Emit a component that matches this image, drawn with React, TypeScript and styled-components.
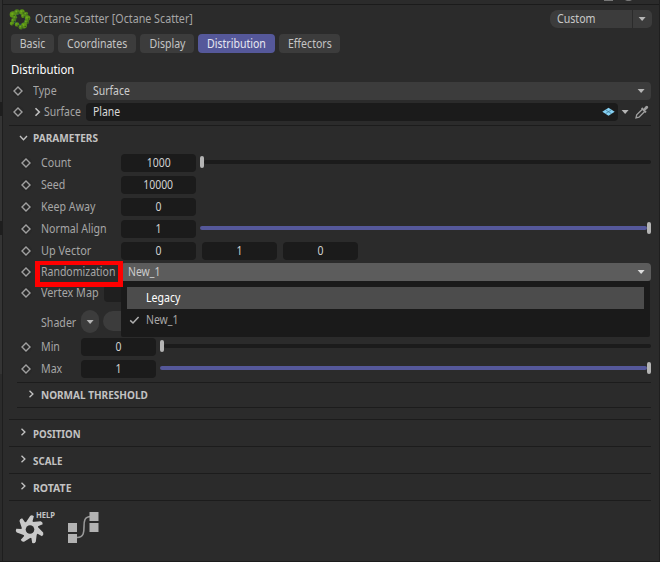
import React from "react";
import styled, { createGlobalStyle } from "styled-components";

const Global = createGlobalStyle`
  * { box-sizing: border-box; }
  body { margin: 0; background: #2b2b2b; overflow: hidden; }
`;

const Window = styled.div`
  width: 660px;
  height: 562px;
  display: grid;
  grid-template-columns: 3px 1fr 1px;
  background: #2b2b2b;
  border-bottom: 1px solid #1c1c1c;
  color: #a6a6a6;
  font: 12px/18px "Noto Sans", "Open Sans", sans-serif;
  white-space: nowrap;
`;
const LeftEdge = styled.div`
  display: flex;
  flex-direction: column;
  background: #303030;
  border-right: 1px solid #1e1e1e;
`;
const EdgePiece = styled.div<{ $h: number; $c: string }>`
  height: ${(p) => p.$h}px;
  background: ${(p) => p.$c};
`;
const RightEdge = styled.div`
  background: #1f1f1f;
`;
const Panel = styled.main`
  min-width: 0;
  display: flex;
  flex-direction: column;
`;
const TopStrip = styled.div`
  height: 5px;
  flex: none;
  padding-left: 601px;
  border-bottom: 1px solid #1b1b1b;
  svg { display: block; }
`;
const Header = styled.header`
  height: 29px;
  flex: none;
  display: flex;
  align-items: flex-start;
  padding: 4px 7px 0 6px;
  > svg { flex: none; }
`;
const Title = styled.div`
  flex: 1;
  padding: 1px 0 0 4px;
`;
const Preset = styled.div`
  display: grid;
  grid-template-columns: 82px 19px;
  gap: 1px;
  width: 102px;
  height: 18px;
  margin-top: 1px;
`;
const PresetName = styled.div`
  padding-left: 7px;
  border-radius: 8px 0 0 8px;
  background: #3c3c3c;
  color: #c8c8c8;
`;
const PresetButton = styled.div`
  display: grid;
  place-items: center;
  border-radius: 0 5px 5px 0;
  background: #3c3c3c;
`;
const Tabs = styled.nav`
  display: flex;
  gap: 4px;
  height: 19px;
  flex: none;
  padding-left: 8px;
`;
const Tab = styled.div<{ $w: number; $active?: boolean }>`
  width: ${(p) => p.$w}px;
  height: 19px;
  line-height: 20px;
  display: flex;
  justify-content: center;
  border-radius: 4px;
  background: ${(p) => (p.$active ? "#55589a" : "#3c3c3c")};
  color: ${(p) => (p.$active ? "#e6e6f0" : "#c4c4c4")};
`;
const Heading = styled.h1`
  height: 29px;
  flex: none;
  margin: 0;
  padding: 6px 0 0 8px;
  font-size: 13px;
  font-weight: 400;
  line-height: 20px;
  color: #fff;
`;
/* Condensed lettering; $x is the horizontal scale of the face. */
const Text = styled.span<{ $x?: number; $center?: boolean }>`
  display: inline-block;
  transform: scaleX(${(p) => p.$x ?? 0.885});
  transform-origin: ${(p) => (p.$center ? "center" : "left")};
`;
const Row = styled.div<{ $h?: number; $left?: number }>`
  height: ${(p) => p.$h ?? 22}px;
  flex: none;
  display: flex;
  align-items: flex-start;
  padding-left: ${(p) => p.$left ?? 17}px;
  padding-right: 8px;
  > svg { flex: none; }
`;
const Label = styled.div<{ $w: number; $drop?: number }>`
  width: ${(p) => p.$w}px;
  flex: none;
  padding: ${(p) => p.$drop ?? 0}px 0 0 9px;
`;
const LinkLabel = styled.div`
  width: 62px;
  flex: none;
  display: flex;
  padding-left: 8px;
  gap: 1px;
  > svg { flex: none; }
`;
const Select = styled.div<{ $open?: boolean }>`
  flex: 1;
  height: 18px;
  display: flex;
  justify-content: space-between;
  align-items: center;
  padding: 0 5px 0 7px;
  border-radius: 4px ${(p) => (p.$open ? "4px 3px 0" : "4px 4px 4px")};
  background: ${(p) => (p.$open ? "#5c5c5c" : "#3c3c3c")};
  color: #cccccc;
`;
const LinkField = styled.div`
  width: 532px;
  height: 18px;
  flex: none;
  display: flex;
  align-items: center;
  justify-content: space-between;
  padding: 0 3px 0 7px;
  border-radius: 4px;
  background: #1b1b1b;
  color: #d8d8d8;
`;
const LinkTools = styled.div`
  flex: 1;
  height: 18px;
  display: flex;
  align-items: center;
  justify-content: space-between;
  padding: 0 2px 0 3px;
`;
const NumberField = styled.div`
  width: 75px;
  height: 18px;
  flex: none;
  margin-right: 6px;
  border-radius: 4px;
  background: #1b1b1b;
  color: #d2d2d2;
  text-align: center;
`;
const Slider = styled.div`
  flex: 1;
  height: 4px;
  display: flex;
  align-items: center;
  margin: 6px 0 0 -2px;
`;
const Track = styled.div<{ $full?: boolean }>`
  flex: 1;
  height: 4px;
  border-radius: 2px;
  background: ${(p) => (p.$full ? "#55589a" : "#1b1b1b")};
`;
const Thumb = styled.div`
  width: 4px;
  height: 12px;
  border-radius: 2px;
  background: #b4b4b4;
`;
const Rule = styled.hr<{ $inset?: boolean; $after?: number }>`
  height: 1px;
  flex: none;
  margin: 0 8px ${(p) => p.$after ?? 0}px ${(p) => (p.$inset ? 14 : 6)}px;
  border: 0;
  background: #1c1c1c;
`;
const Section = styled.div<{ $h: number; $inset?: boolean; $open?: boolean }>`
  height: ${(p) => p.$h}px;
  flex: none;
  display: flex;
  align-items: center;
  padding: 0 0 ${(p) => (p.$open ? 5 : p.$inset ? 1 : 0)}px ${(p) => (p.$inset ? 23 : 15)}px;
  gap: 4px;
  color: #c2c2c2;
  font-size: 11px;
  font-weight: 700;
  > svg { margin-bottom: ${(p) => (p.$open ? 0 : 2)}px; }
  > span { padding-top: ${(p) => (p.$open ? 0 : 1)}px; }
`;
const MapSlot = styled.div`
  width: 500px;
  height: 17px;
  margin-top: 1px;
  border-radius: 4px;
  background: #1f1f1f;
`;
const ShaderButton = styled.div`
  width: 18px;
  height: 23px;
  display: grid;
  place-items: center;
  margin-right: 4px;
  border-radius: 9px;
  background: #3c3c3c;
`;
const ShaderSlot = styled.div`
  width: 80px;
  height: 20px;
  margin-top: 1px;
  border-radius: 10px;
  background: #3c3c3c;
`;
const SelectAnchor = styled.div`
  position: relative;
  flex: 1;
  display: flex;
`;
const Menu = styled.div`
  position: absolute;
  top: 18px;
  left: 0;
  z-index: 2;
  width: 529px;
  height: 56px;
  padding: 6px;
  border-radius: 0 0 2px 2px;
  background: #1a1a1a;
`;
const Option = styled.div<{ $hot?: boolean }>`
  display: grid;
  grid-template-columns: 19px 1fr;
  align-items: center;
  width: 517px;
  height: 22px;
  background: ${(p) => (p.$hot ? "#4c4c4c" : "transparent")};
  color: ${(p) => (p.$hot ? "#ffffff" : "#a8a8a8")};
`;
const LabelAnchor = styled.div`
  position: relative;
  flex: none;
`;
const Callout = styled.div`
  position: absolute;
  top: -2px;
  left: 3px;
  z-index: 3;
  width: 88px;
  height: 26px;
  border: 5px solid #ff0000;
  border-top-width: 4px;
`;
const Footer = styled.footer`
  display: flex;
  align-items: flex-start;
  padding: 9px 0 0 12px;
  gap: 10px;
`;

const Key = () => (
  <svg width="12" height="18" viewBox="0 0 12 18">
    <circle cx="6" cy="9" r="6" fill="#282828" />
    <path d="M6 5 10 9 6 13 2 9Z" fill="none" stroke="#a0a0a0" strokeWidth="1.4" />
  </svg>
);
const Arrow = ({ color = "#b5b5b5" }: { color?: string }) => (
  <svg width="9" height="6" viewBox="0 0 9 6">
    <path d="M.6 1h7L4.1 5Z" fill={color} />
  </svg>
);
const Chevron = ({ down, link }: { down?: boolean; link?: boolean }) => (
  <svg width="11" height={link ? 18 : 10} viewBox={link ? "0 -4 11 18" : "0 0 11 10"}>
    <path
      d={down ? "M2 3l3.5 3.7L9 3" : link ? "M3.5 1.2 7.3 5 3.5 8.8" : "M3.5 1.7 6.9 5 3.5 8.3"}
      fill="none"
      stroke="#c2c2c2"
      strokeWidth={link ? 1.6 : 1.35}
    />
  </svg>
);
const leaves: [number, number, number][] = [
  [4, 5.5, 3.3], [8, 3, 2.8], [13, 3, 2.7], [17, 5, 2.2], [18.6, 9, 2.7],
  [17.5, 13, 2.4], [15, 16.5, 2.9], [12, 18.2, 2.4], [8, 15.4, 2.2], [4.4, 11.5, 2.4], [2.8, 14.6, 2], [6, 8.6, 2.2], [14, 7, 1.9],
];
const ScatterIcon = () => (
  <svg width="22" height="21" viewBox="0 0 22 21">
    <ellipse cx="11" cy="10" rx="6" ry="6" fill="none" stroke="#23405c" strokeWidth="2.4" />
    {leaves.map(([x, y, r], i) => (
      <g key={i}>
        <circle cx={x} cy={y} r={r} fill={i % 2 ? "#4f831b" : "#5c9415"} />
        <circle cx={x - 0.7} cy={y - 0.6} r={r * 0.35} fill="#6da81c" />
        <circle cx={x + 1.2} cy={y + 1} r=".7" fill="#2c4c20" />
      </g>
    ))}
  </svg>
);
const PlaneIcon = () => (
  <svg width="14" height="10" viewBox="0 0 14 10">
    <path d="M7.5 .7 13.7 4.7 7.5 8.7 1.3 4.7Z" fill="#86d1f3" />
    <path d="M4.5 2.7 10.5 6.7M10.5 2.7 4.5 6.7" stroke="#2b6580" strokeWidth=".6" />
  </svg>
);
const Dropper = () => (
  <svg width="14" height="14" viewBox="0 0 14 14">
    <path d="M7.6 4 1.7 9.9 1 12.9 4 12.2 9.9 6.3" fill="none" stroke="#a0a0a0" strokeWidth="1.3" />
    <path d="M6.6 3 11 7.4" stroke="#a0a0a0" strokeWidth="1.8" />
    <path d="M8.2 4.2 10.4 1.4Q11.8 .2 12.8 1.2 13.8 2.2 12.6 3.6L9.8 5.8Z" fill="#a0a0a0" />
  </svg>
);
const Check = () => (
  <svg width="13" height="10" viewBox="0 0 13 10">
    <path d="M3.2 5.4 6 8 11.6 1.9" fill="none" stroke="#b0b0b0" strokeWidth="1.5" />
  </svg>
);
const HelpIcon = () => (
  <svg width="42" height="36" viewBox="0 0 42 36">
    <g transform="translate(15 19.5)" fill="#c9c9c9">
      {[0, 1, 2, 3, 4, 5, 6].map((i) => (
        <path key={i} transform={`rotate(${i * 51.43 + 8})`} d="M-6.4-3.6-1.8-13.4Q-.2-15 2-13.6L1.3-8.6 5.6-5.6 3-3-3-3Z" />
      ))}
      <circle r="7.6" />
      <circle r="4.3" fill="#2b2b2b" />
    </g>
    <text x="21" y="8.4" fill="#c4c4c4" fontFamily="Noto Sans" fontSize="8" fontWeight="700" textLength="19" lengthAdjust="spacingAndGlyphs">HELP</text>
  </svg>
);
const NodesIcon = () => (
  <svg width="34" height="34" viewBox="0 0 34 34">
    <path d="M10 27.5C24 27 10 6.5 24 6.5" fill="none" stroke="#999" strokeWidth="1.6" />
    <path d="M1 13h9v9H1ZM1 24h9v9H1ZM22.500 2h9v9h-9ZM22.500 13h9v9h-9Z" fill="#b2b2b2" />
  </svg>
);

type ParamProps = { label: string; x?: number; values: string[]; slider?: "empty" | "full"; labelWidth?: number; height?: number };
const Param = ({ label, x, values, slider, labelWidth = 89, height }: ParamProps) => (
  <Row $h={height}>
    <Key />
    <Label $w={labelWidth}><Text $x={x}>{label}</Text></Label>
    {values.map((v, i) => <NumberField key={i}><Text $center $x={0.87}>{v}</Text></NumberField>)}
    {slider && (
      <Slider>
        {slider === "empty" && <Thumb />}
        <Track $full={slider === "full"} />
        {slider === "full" && <Thumb />}
      </Slider>
    )}
  </Row>
);

const tabs: [string, number][] = [["Basic", 43], ["Coordinates", 78], ["Display", 54], ["Distribution", 77], ["Effectors", 61]];

export default function App() {
  return (
    <>
      <Global />
      <Window>
        <LeftEdge>
          <EdgePiece $h={102} $c="#303030" />
          <EdgePiece $h={14} $c="#1e1e1e" />
          <EdgePiece $h={105} $c="#343434" />
          <EdgePiece $h={14} $c="#1e1e1e" />
          <EdgePiece $h={139} $c="#343434" />
          <EdgePiece $h={187} $c="#2b2b2b" />
        </LeftEdge>
        <Panel>
          <TopStrip>
            <svg width="30" height="2"><path d="M0 0h9v1H0ZM21 0h7l-2 1h-3Z" fill="#777" /></svg>
          </TopStrip>
          <Header>
            <ScatterIcon />
            <Title><Text $x={0.892}>Octane Scatter [Octane Scatter]</Text></Title>
            <Preset>
              <PresetName><Text>Custom</Text></PresetName>
              <PresetButton><Arrow /></PresetButton>
            </Preset>
          </Header>
          <Tabs>
            {tabs.map(([name, w]) => (
              <Tab key={name} $w={w} $active={name === "Distribution"}><Text $center $x={0.88}>{name}</Text></Tab>
            ))}
          </Tabs>
          <Heading><Text $x={0.875}>Distribution</Text></Heading>
          <Row $h={21} $left={9}>
            <Key />
            <Label $w={62}><Text>Type</Text></Label>
            <Select><Text $x={0.87}>Surface</Text><Arrow /></Select>
          </Row>
          <Row $h={22} $left={9}>
            <Key />
            <LinkLabel><Chevron link /><Text $x={0.87}>Surface</Text></LinkLabel>
            <LinkField><Text $x={0.87}>Plane</Text><PlaneIcon /></LinkField>
            <LinkTools><Arrow /><Dropper /></LinkTools>
          </Row>
          <Rule />
          <Section $h={28} $open><Chevron down /><Text $x={0.915}>PARAMETERS</Text></Section>
          <Param label="Count" values={["1000"]} slider="empty" />
          <Param label="Seed" values={["10000"]} />
          <Param label="Keep Away" values={["0"]} />
          <Param label="Normal Align" values={["1"]} slider="full" />
          <Param label="Up Vector" x={0.91} values={["0", "1", "0"]} height={21} />
          <Row $h={21}>
            <Key />
            <LabelAnchor>
              <Label $w={89}><Text $x={0.875}>Randomization</Text></Label>
              <Callout />
            </LabelAnchor>
            <SelectAnchor>
              <Select $open><Text $x={0.87}>New_1</Text><Arrow color="#dddddd" /></Select>
              <Menu>
                <Option $hot><span /><Text $x={0.88}>Legacy</Text></Option>
                <Option><Check /><Text $x={0.87}>New_1</Text></Option>
              </Menu>
            </SelectAnchor>
          </Row>
          <Row $h={26}>
            <Key />
            <Label $w={72}><Text $x={0.9}>Vertex Map</Text></Label>
            <MapSlot />
          </Row>
          <Row $h={28} $left={29}>
            <Label $w={49} $drop={4}><Text>Shader</Text></Label>
            <ShaderButton><Arrow /></ShaderButton>
            <ShaderSlot />
          </Row>
          <Param label="Min" values={["0"]} slider="empty" labelWidth={49} />
          <Param label="Max" values={["1"]} slider="full" labelWidth={49} />
          <Rule $inset />
          <Section $h={24} $inset><Chevron /><Text $x={0.91}>NORMAL THRESHOLD</Text></Section>
          <Rule $inset $after={11} />
          <Rule />
          <Section $h={26}><Chevron /><Text $x={0.88}>POSITION</Text></Section>
          <Rule />
          <Section $h={26}><Chevron /><Text $x={0.89}>SCALE</Text></Section>
          <Rule />
          <Section $h={26}><Chevron /><Text $x={0.95}>ROTATE</Text></Section>
          <Rule />
          <Footer><HelpIcon /><NodesIcon /></Footer>
        </Panel>
        <RightEdge />
      </Window>
    </>
  );
}
